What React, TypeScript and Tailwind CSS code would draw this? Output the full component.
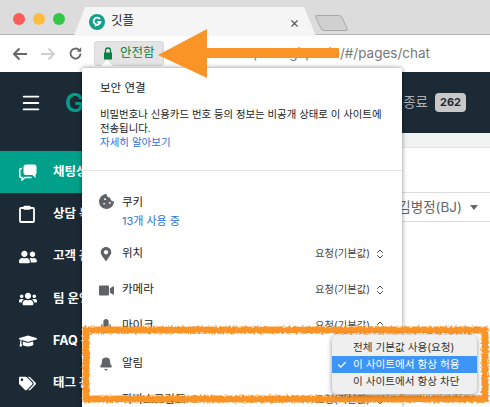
import { Bell, Check, ChevronsUpDown, Menu, X } from 'lucide-react';
import { FaVideo, FaMapMarkerAlt, FaCookieBite, FaGraduationCap, FaTags, FaUsers, FaUserFriends, FaMicrophone } from 'react-icons/fa';
import type { ReactNode } from 'react';

const FONT = "font-['Inter','Noto_Sans_CJK_KR',sans-serif]";

function ChatIcon() {
  return (
    <svg width="18" height="17" viewBox="0 0 18 17" fill="none">
      <path d="M3 4.500H2a1.500 1.500 0 0 0-1.200 1.500v6A1.500 1.500 0 0 0 2.300 13.500H3v2.500l3-2.500h6.500" stroke="#fff" strokeWidth="1.500" />
      <rect x="4.500" y="0.500" width="13" height="10.500" rx="2.500" fill="#fff" />
      <path d="M13 10.500h3.500v3.500z" fill="#fff" />
    </svg>
  );
}

function ClipboardIcon() {
  return (
    <svg width="16" height="18" viewBox="0 0 16 18" fill="none">
      <rect x="1" y="3" width="14" height="14" rx="1" stroke="#fff" strokeWidth="1.800" />
      <rect x="4.500" y="0.800" width="7" height="4" rx="0.800" fill="#fff" />
    </svg>
  );
}

const sideItems: { label: string; icon: ReactNode; active?: boolean }[] = [
  { label: '채팅상담', icon: <ChatIcon />, active: true },
  { label: '상담 목록', icon: <ClipboardIcon /> },
  { label: '고객 관리', icon: <FaUserFriends size={18} /> },
  { label: '팀 운영', icon: <FaUsers size={18} /> },
  { label: 'FAQ 관리', icon: <FaGraduationCap size={18} /> },
  { label: '태그 관리', icon: <FaTags size={17} /> },
];

function Sidebar() {
  return (
    <div className="flex w-[82px] shrink-0 flex-col bg-[#1b2a35] pt-[18px]">
      {sideItems.map((item) => (
        <div
          key={item.label}
          className={`flex h-[42.300px] w-[82px] shrink-0 items-center whitespace-nowrap pl-[19px] text-white ${item.active ? 'bg-[#00a08a]' : ''}`}
        >
          <span className="flex w-[34px] shrink-0">{item.icon}</span>
          <span className="text-[12.500px] font-bold">{item.label}</span>
        </div>
      ))}
    </div>
  );
}

function Permission({ icon, label, rowClass }: { icon: ReactNode; label: string; rowClass: string }) {
  return (
    <div className={`flex items-center justify-between pl-[17px] pr-[16px] ${rowClass}`}>
      <div className="flex items-center">
        <span className="flex w-[23px] justify-start text-[#5f6368]">{icon}</span>
        <span className="text-[11.500px] text-[#222]">{label}</span>
      </div>
      <div className="flex items-center gap-[4px] text-[10.300px] text-[#444]">
        요청(기본값)
        <ChevronsUpDown size={12} strokeWidth={2} />
      </div>
    </div>
  );
}

function SecurityPopover() {
  return (
    <div className="absolute left-[82px] top-[68px] h-[339px] w-[320px] overflow-hidden rounded-t-[2px] bg-white shadow-[0_0_5px_rgba(0,0,0,0.45)]">
      <div className="h-[103px] border-b border-[#e6e6e6] pl-[18px] pr-[16px] pt-[11px]">
        <div className="text-[11.500px] leading-[18px] text-[#222]">보안 연결</div>
        <p className="mt-[11px] text-[10.400px] leading-[14px] text-[#222]">
          비밀번호나 신용카드 번호 등의 정보는 비공개 상태로 이 사이트에
          <br />
          전송됩니다.
        </p>
        <div className="text-[10.500px] leading-[14px] text-[#2a73dc]">자세히 알아보기</div>
      </div>
      <div className="flex items-start pl-[17px] pt-[22px]">
        <span className="flex w-[23px] pt-[1px] text-[#5f6368]">
          <FaCookieBite size={15} />
        </span>
        <div>
          <div className="text-[11.500px] leading-[18px] text-[#222]">쿠키</div>
          <div className="mt-[2px] text-[11px] leading-[16px] text-[#2a73dc]">13개 사용 중</div>
        </div>
      </div>
      <Permission rowClass="mt-[15px] h-[20px]" icon={<FaMapMarkerAlt size={14} />} label="위치" />
      <Permission rowClass="mt-[16px] h-[20px]" icon={<FaVideo size={15} />} label="카메라" />
      <Permission rowClass="mt-[16px] h-[20px]" icon={<FaMicrophone size={14} />} label="마이크" />
      <div className="mt-[18px] flex h-[20px] items-center pl-[17px]">
        <span className="flex w-[23px] text-[#5f6368]">
          <Bell size={14} fill="currentColor" />
        </span>
        <span className="text-[11.500px] text-[#222]">알림</span>
      </div>
      <Permission rowClass="mt-[16px] h-[20px]" icon={null} label="자바스크립트" />
    </div>
  );
}

function SelectMenu() {
  const rows = ['전체 기본값 사용(요청)', '이 사이트에서 항상 허용', '이 사이트에서 항상 차단'];
  return (
    <div className="absolute left-[332px] top-[335px] w-[145px] rounded-[5px] bg-[#efefef] py-[4px] shadow-[0_1px_5px_rgba(0,0,0,0.45)]">
      {rows.map((row, i) => (
        <div
          key={row}
          className={`flex h-[17px] items-center whitespace-nowrap pl-[21px] text-[10.600px] ${i === 1 ? 'relative bg-[#3d95f7] text-white' : 'text-[#333]'}`}
        >
          {i === 1 && <Check size={10} strokeWidth={3} className="absolute left-[5px] top-[4px]" />}
          {row}
        </div>
      ))}
    </div>
  );
}

function Annotations() {
  return (
    <svg className="pointer-events-none absolute left-0 top-0" width="490" height="407" viewBox="0 0 490 407">
      <defs>
        <filter id="rough" x="-5%" y="-10%" width="110%" height="120%">
          <feTurbulence type="fractalNoise" baseFrequency="0.45" numOctaves="2" seed="4" />
          <feDisplacementMap in="SourceGraphic" scale="4" />
        </filter>
      </defs>
      <rect x="86" y="330" width="399" height="69" fill="none" stroke="#fb9426" strokeWidth="7" filter="url(#rough)" />
      <path d="M158 55 L207 29 L207 48 L339 48 L339 58 L207 58 L207 78 Z" fill="#fb9426" />
    </svg>
  );
}

export default function App() {
  return (
    <div className={`relative flex h-[407px] w-[490px] flex-col overflow-hidden bg-white ${FONT}`}>
      {/* tab strip */}
      <div className="relative h-[35px] shrink-0 border-b border-[#b5b5b5] bg-[#dcdcdc]">
        <div className="flex gap-[8px] pl-[13px] pt-[13px]">
          <span className="h-[12px] w-[12px] rounded-full bg-[#fc5b57]" />
          <span className="h-[12px] w-[12px] rounded-full bg-[#fdbc40]" />
          <span className="h-[12px] w-[12px] rounded-full bg-[#33c748]" />
        </div>
        <div className="absolute left-[74px] top-[7px] flex h-[29px] w-[242px] items-center bg-[#f5f5f5] pl-[15px] [clip-path:polygon(0_100%,11px_0,230px_0,100%_100%)]">
          <svg width="16" height="16" viewBox="0 0 16 16" className="shrink-0">
            <circle cx="8" cy="8" r="8" fill="#12a08c" />
            <path d="M11 5.200A3.500 3.500 0 1 0 11.500 8H8.300" fill="none" stroke="#fff" strokeWidth="1.800" />
            <path d="M5.500 12.800 L10 11 L7 10 Z" fill="#fff" />
          </svg>
          <span className="ml-[6px] text-[12.500px] text-[#222]">깃플</span>
          <X size={11} strokeWidth={2.500} className="absolute left-[215px] top-[11px] text-[#555]" />
        </div>
        <div className="absolute left-[318px] top-[15px] h-[16px] w-[27px] skew-x-[25deg] rounded-[3px] border border-[#a8a8a8] bg-[#d0d0d0]" />
      </div>

      {/* address bar */}
      <div className="flex h-[37px] shrink-0 items-center bg-white pl-[12px] pr-[60px]">
        <svg width="15" height="14" viewBox="0 0 15 14" fill="none" stroke="#666" strokeWidth="2">
          <path d="M15 7H2M7.500 1.500 2 7l5.500 5.500" />
        </svg>
        <svg width="15" height="14" viewBox="0 0 15 14" fill="none" stroke="#d0d0d0" strokeWidth="2" className="ml-[14px]">
          <path d="M0 7h13M7.500 1.500 13 7l-5.500 5.500" />
        </svg>
        <svg width="15" height="15" viewBox="0 0 24 24" fill="none" stroke="#666" strokeWidth="3" className="ml-[12px]">
          <path d="M20 12a8 8 0 1 1-2.500-5.800" />
          <path d="M21 2v7h-7" fill="#666" stroke="none" />
        </svg>
        <div className="ml-[11px] flex h-[25px] w-[70px] shrink-0 items-center rounded-[3px] border border-[#d8d8d8] bg-[#e4e4e4] pl-[8px]">
          <svg width="10" height="13" viewBox="0 0 10 13">
            <path d="M2.500 6V3.500a2.500 2.500 0 0 1 5 0V6" fill="none" stroke="#0b8043" strokeWidth="1.300" />
            <rect x="1" y="5.500" width="8" height="7" fill="#0b8043" />
          </svg>
          <span className="ml-[7px] text-[12.500px] text-[#0b8043]">안전함</span>
        </div>
        <span className="ml-auto whitespace-nowrap text-[13.500px] text-[#777]">workspace.gitple.io/#/pages/chat</span>
      </div>

      <div className="flex min-h-0 flex-1 flex-col">
        {/* app header */}
        <div className="flex h-[61px] shrink-0 items-center bg-[#1b2a35] pl-[20px] pr-[24px] text-white">
          <Menu size={22} strokeWidth={2} />
          <span className="ml-[23px] text-[26px] font-semibold leading-none text-[#00a08a]">G</span>
          <span className="ml-auto text-[13.500px] text-[#aab2b8]">종료</span>
          <span className="ml-[7px] rounded-[4px] bg-[#c8c8c8] px-[5px] py-[1px] text-[11px] font-bold text-[#1b2a35]">262</span>
        </div>
        <div className="flex min-h-0 flex-1">
          <Sidebar />
          <div className="flex min-w-0 flex-1 flex-col">
            <div className="h-[15px] shrink-0 border-b border-[#e4e6e6] bg-[#f1f3f3]" />
            <div className="mt-[44px] flex h-[30px] shrink-0 items-center justify-end border-y border-[#dcdcdc] pr-[12px] text-[13.500px] text-[#666]">
              김병정(BJ)
              <svg width="8" height="5" viewBox="0 0 8 5" className="ml-[8px]">
                <path d="M0 0h8L4 5z" fill="#666" />
              </svg>
            </div>
          </div>
        </div>
      </div>

      <div className="absolute left-[102px] top-[62px] h-[10px] w-[10px] rotate-45 bg-white" />
      <SecurityPopover />
      <Annotations />
      <SelectMenu />
    </div>
  );
}
